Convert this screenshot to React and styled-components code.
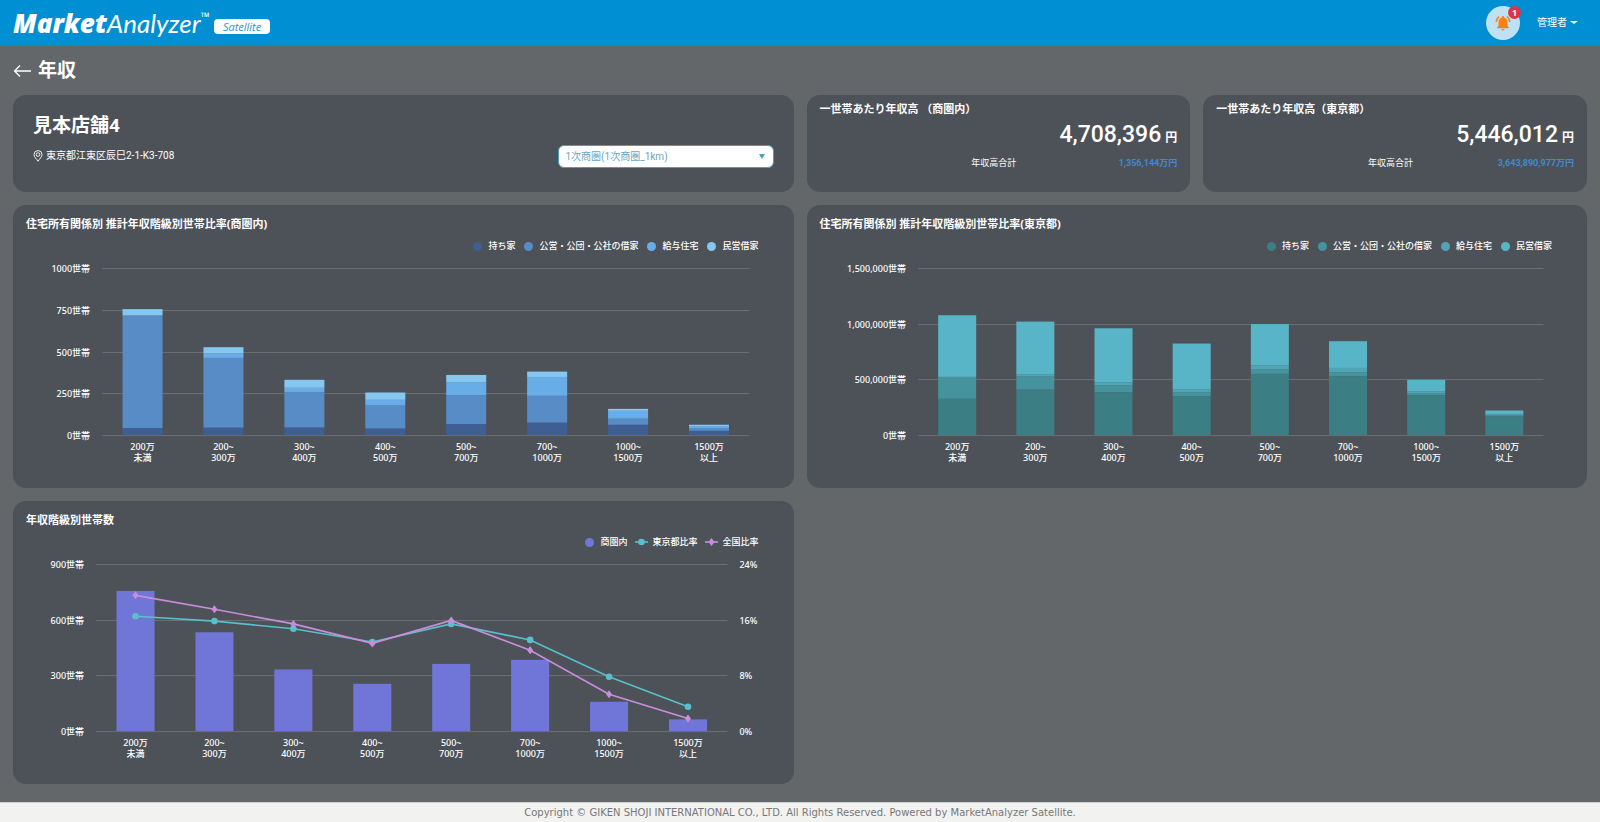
import React from "react";
import styled, { createGlobalStyle } from "styled-components";
import { MdNotificationsActive } from "react-icons/md";

const GlobalStyle = createGlobalStyle`
  *, *::before, *::after { box-sizing: border-box; }
  body {
    margin: 0;
    background: #636769;
    color: #fff;
    font-family: Roboto, "Noto Sans CJK JP", sans-serif;
  }
  h1, h2, p { margin: 0; }
`;

const chartFont = `"Noto Sans", "Noto Sans CJK JP", sans-serif`;

const Page = styled.div`
  min-height: 100vh;
  display: flex;
  flex-direction: column;
`;

const Header = styled.header`
  height: 46px;
  padding: 0 22px 0 13px;
  background: #008fd3;
  display: flex;
  align-items: center;
  justify-content: space-between;
`;

const Brand = styled.a`
  display: flex;
  align-items: center;
  gap: 4px;
  color: #fff;
  text-decoration: none;
`;

const Wordmark = styled.span`
  display: flex;
  align-items: baseline;
  font: italic 400 26px/32px Lato, sans-serif;

  b { font-family: "Open Sans", sans-serif; font-weight: 800; }
  sup {
    align-self: flex-start;
    padding-top: 4px;
    font: italic 600 12px/12px "Open Sans", sans-serif;
  }
`;

const Product = styled.span`
  height: 15px;
  padding: 0 9px;
  margin-top: 7px;
  border-radius: 4px;
  background: #fff;
  color: #2a95d0;
  font: italic 400 11px/15px "Open Sans", sans-serif;
`;

const HeaderTools = styled.div`
  display: flex;
  align-items: center;
  gap: 17px;
`;

const BellButton = styled.button`
  position: relative;
  width: 34px;
  height: 34px;
  padding: 0;
  border: 0;
  border-radius: 50%;
  background: #bfe1f4;
  color: #ff7f11;
  display: grid;
  place-items: center;
`;

const Badge = styled.span`
  position: absolute;
  top: 0;
  right: -1px;
  width: 13px;
  height: 13px;
  border-radius: 50%;
  background: #dc3545;
  color: #fff;
  font: 700 9px/13px "Noto Sans", sans-serif;
  text-align: center;
`;

const UserMenu = styled.button`
  padding: 0 0 2px;
  border: 0;
  background: none;
  color: #fff;
  font: 400 10px/16px "Noto Sans CJK JP", sans-serif;
  display: flex;
  align-items: center;
  gap: 3px;

  &::after {
    content: "";
    border: 4px solid transparent;
    border-top: 3px solid #fff;
    border-bottom: 0;
  }
`;

const Main = styled.main`
  flex: 1;
  padding: 0 13px 18px;
`;

const TitleBar = styled.div`
  height: 49px;
  display: flex;
  align-items: center;
  gap: 7px;
`;

const BackLink = styled.a`
  display: flex;
  color: #fff;
`;

const PageTitle = styled.h1`
  font-size: 19px;
  line-height: 28px;
  font-weight: 700;
`;

const Grid = styled.div`
  display: grid;
  grid-template-columns: repeat(4, 1fr);
  gap: 13px;
`;

const Card = styled.section`
  grid-column: span ${(p) => p.$span || 1};
  min-width: 0;
  border-radius: 13px;
  background: #4d5258;
`;

const StoreCard = styled(Card)`
  padding: 15px 20px 24px;
  display: flex;
  justify-content: space-between;
  align-items: flex-end;
`;

const StoreName = styled.h2`
  font-size: 19px;
  line-height: 30px;
  font-weight: 700;
`;

const Address = styled.p`
  display: flex;
  align-items: center;
  gap: 3px;
  padding: 7px 0 4px;
  font-size: 10px;
  line-height: 16px;
`;

const SelectBox = styled.label`
  position: relative;
  width: 216px;

  &::after {
    content: "";
    position: absolute;
    top: 9px;
    right: 9px;
    border: 3px solid transparent;
    border-top: 5px solid #45a3b5;
    border-bottom: 0;
    pointer-events: none;
  }
`;

const Select = styled.select`
  display: block;
  width: 100%;
  height: 23px;
  padding: 0 7px;
  border: 1px solid #45a3b5;
  border-radius: 6px;
  appearance: none;
  background: #fff;
  color: #6aa5c0;
  font: 400 10px/20px Roboto, "Noto Sans CJK JP", sans-serif;
`;

const StatCard = styled(Card)`
  padding: 6px 13px 21px;
`;

const CardTitle = styled.h2`
  font: 700 11px/16px "Noto Sans", "Noto Sans CJK JP", sans-serif;
`;

const StatValue = styled.p`
  margin-top: 4px;
  text-align: right;
  font-size: 23px;
  line-height: 28px;
  font-weight: 500;

  small { font-size: 12px; line-height: 1; font-weight: 700; margin-left: 4px; }
`;

const StatTotal = styled.p`
  display: grid;
  grid-template-columns: 55% 45%;
  margin-top: 6px;
  text-align: right;
  font-size: 9px;
  line-height: 16px;

  b { color: #4389cf; font-weight: 700; }
`;

const ChartCard = styled(Card)`
  padding-top: 11px;
  overflow: hidden;

  ${CardTitle} { padding: 0 13px; }
`;

const Legend = styled.ul`
  margin: 8px 35px 0;
  padding: 0;
  list-style: none;
  display: flex;
  justify-content: flex-end;
  gap: ${(p) => p.$gap}px;
  font: 500 9px/12px ${chartFont};
`;

const LegendItem = styled.li`
  display: flex;
  align-items: center;
  gap: ${(p) => (p.$line ? 4 : 6)}px;
`;

const Dot = styled.span`
  width: 9px;
  height: 9px;
  border-radius: 50%;
  background: ${(p) => p.$color};
`;

const ChartSvg = styled.svg`
  display: block;
  width: 100%;
  height: auto;
  fill: #fff;
  font: 500 9px ${chartFont};
`;

const Footer = styled.footer`
  height: 20px;
  border-top: 1px solid #d0d0d0;
  background: #f2f2f1;
  color: #777;
  text-align: center;
  font: 400 10px/19px "DejaVu Sans", sans-serif;
`;

const CATEGORIES = [
  ["200万", "未満"],
  ["200~", "300万"],
  ["300~", "400万"],
  ["400~", "500万"],
  ["500~", "700万"],
  ["700~", "1000万"],
  ["1000~", "1500万"],
  ["1500万", "以上"],
];

const HOUSING = ["持ち家", "公営・公団・公社の借家", "給与住宅", "民営借家"];

/* Running totals per income class, in the order of HOUSING. */
const AREA = {
  left: 89,
  right: 736,
  max: 1000,
  barWidth: 40,
  ticks: [[0, "0世帯"], [250, "250世帯"], [500, "500世帯"], [750, "750世帯"], [1000, "1000世帯"]],
  colors: ["#3e5e94", "#578cc6", "#69ade8", "#85c7f0"],
  stacks: [
    [42, 714, 717, 754],
    [45, 462, 490, 526],
    [46, 255, 283, 331],
    [40, 177, 211, 255],
    [66, 239, 317, 360],
    [75, 235, 348, 380],
    [62, 98, 145, 157],
    [26, 42, 54, 62],
  ],
};

const TOKYO = {
  left: 111,
  right: 736,
  max: 1500,
  barWidth: 38,
  ticks: [[0, "0世帯"], [500, "500,000世帯"], [1000, "1,000,000世帯"], [1500, "1,500,000世帯"]],
  colors: ["#3b7e83", "#45939c", "#4fa5b3", "#58b5c7"],
  stacks: [
    [326, 515, 523, 1076],
    [409, 526, 547, 1019],
    [385, 448, 475, 959],
    [350, 385, 412, 822],
    [550, 592, 627, 997],
    [529, 562, 603, 843],
    [358, 373, 394, 496],
    [170, 176, 187, 221],
  ],
};

const HOUSEHOLDS = {
  left: 83,
  right: 714,
  max: 900,
  barWidth: 38,
  ticks: [[0, "0世帯", "0%"], [300, "300世帯", "8%"], [600, "600世帯", "16%"], [900, "900世帯", "24%"]],
  colors: ["#7076d8"],
  stacks: [[755], [532], [332], [255], [362], [384], [158], [63]],
  lines: [
    { name: "東京都比率", color: "#58bfcc", values: [16.5, 15.8, 14.7, 12.8, 15.4, 13.1, 7.8, 3.5] },
    { name: "全国比率", color: "#cb8ddb", diamond: true, values: [19.5, 17.5, 15.4, 12.6, 15.9, 11.6, 5.3, 1.8] },
  ],
};

const TOP = 16;
const BASE = 183;

function Marker({ x, y, color, diamond }) {
  return diamond ? (
    <path d={`M${x} ${y - 4}L${x + 3} ${y}L${x} ${y + 4}L${x - 3} ${y}Z`} fill={color} />
  ) : (
    <circle cx={x} cy={y} r="3.3" fill={color} />
  );
}

function Chart({ data, label }) {
  const { left, right, max, barWidth, ticks, colors, stacks, lines = [] } = data;
  const step = (right - left) / CATEGORIES.length;
  const center = (i) => left + step * (i + 0.5);
  const y = (v, top = max) => BASE - (v / top) * (BASE - TOP);
  return (
    <ChartSvg viewBox="0 0 780 236" role="img" aria-label={label}>
      {ticks.map(([v, text, percent]) => (
        <g key={text}>
          <rect x={left} y={Math.round(y(v))} width={right - left} height="1" fill="#6e6f71" />
          <text x={left - 12} y={y(v) + 4} textAnchor="end">{text}</text>
          {percent && <text x={right + 12} y={y(v) + 4}>{percent}</text>}
        </g>
      ))}
      {stacks.map((stack, i) =>
        stack.map((v, k) => {
          const from = k ? stack[k - 1] : 0;
          return (
            <rect
              key={`${i}-${k}`}
              x={center(i) - barWidth / 2}
              y={y(v)}
              width={barWidth}
              height={y(from) - y(v)}
              fill={colors[k]}
            />
          );
        })
      )}
      {lines.map((line) => (
        <g key={line.name}>
          <polyline
            points={line.values.map((v, i) => `${center(i)},${y(v, 24)}`).join(" ")}
            fill="none"
            stroke={line.color}
            strokeWidth="1.6"
          />
          {line.values.map((v, i) => (
            <Marker key={i} x={center(i)} y={y(v, 24)} color={line.color} diamond={line.diamond} />
          ))}
        </g>
      ))}
      {CATEGORIES.map(([first, second], i) => (
        <g key={first} textAnchor="middle">
          <text x={center(i)} y={BASE + 15}>{first}</text>
          <text x={center(i)} y={BASE + 26}>{second}</text>
        </g>
      ))}
    </ChartSvg>
  );
}

function HousingCard({ title, data }) {
  return (
    <ChartCard $span={2}>
      <CardTitle>{title}</CardTitle>
      <Legend $gap={9}>
        {HOUSING.map((name, i) => (
          <LegendItem key={name}>
            <Dot $color={data.colors[i]} />
            {name}
          </LegendItem>
        ))}
      </Legend>
      <Chart data={data} label={title} />
    </ChartCard>
  );
}

function Stat({ title, value, total }) {
  return (
    <StatCard>
      <CardTitle>{title}</CardTitle>
      <StatValue>{value}<small>円</small></StatValue>
      <StatTotal><span>年収高合計</span><b>{total}</b></StatTotal>
    </StatCard>
  );
}

export default function App() {
  return (
    <Page>
      <GlobalStyle />
      <Header>
        <Brand href="#">
          <Wordmark><b>Market</b>Analyzer<sup>™</sup></Wordmark>
          <Product>Satellite</Product>
        </Brand>
        <HeaderTools>
          <BellButton type="button" aria-label="通知">
            <MdNotificationsActive size={18} />
            <Badge>1</Badge>
          </BellButton>
          <UserMenu type="button">管理者</UserMenu>
        </HeaderTools>
      </Header>
      <Main>
        <TitleBar>
          <BackLink href="#" aria-label="戻る">
            <svg width="18" height="14" viewBox="0 0 18 14" fill="none" stroke="currentColor" strokeWidth="1.3">
              <path d="M18 7H1.500M7 1.500L1.500 7L7 12.500" />
            </svg>
          </BackLink>
          <PageTitle>年収</PageTitle>
        </TitleBar>
        <Grid>
          <StoreCard $span={2}>
            <div>
              <StoreName>見本店舗4</StoreName>
              <Address>
                <svg width="10" height="12" viewBox="0 0 10 12" fill="none" stroke="currentColor" strokeWidth="0.9">
                  <path d="M5 11.300C3.800 9.200 1 7 1 4.600A4 4 0 0 1 9 4.600C9 7 6.200 9.200 5 11.300Z" />
                  <circle cx="5" cy="4.600" r="1.800" />
                </svg>
                東京都江東区辰巳2-1-K3-708
              </Address>
            </div>
            <SelectBox>
              <Select aria-label="商圏" defaultValue="1">
                <option value="1">1次商圏(1次商圏_1km)</option>
              </Select>
            </SelectBox>
          </StoreCard>
          <Stat title="一世帯あたり年収高 （商圏内）" value="4,708,396" total="1,356,144万円" />
          <Stat title="一世帯あたり年収高（東京都）" value="5,446,012" total="3,643,890,977万円" />
          <HousingCard title="住宅所有関係別 推計年収階級別世帯比率(商圏内)" data={AREA} />
          <HousingCard title="住宅所有関係別 推計年収階級別世帯比率(東京都)" data={TOKYO} />
          <ChartCard $span={2}>
            <CardTitle>年収階級別世帯数</CardTitle>
            <Legend $gap={8}>
              <LegendItem><Dot $color={HOUSEHOLDS.colors[0]} />商圏内</LegendItem>
              {HOUSEHOLDS.lines.map((line) => (
                <LegendItem key={line.name} $line>
                  <svg width="13" height="10" viewBox="0 0 13 10">
                    <path d="M0 5H13" stroke={line.color} strokeWidth="1.6" />
                    <Marker x={6.5} y={5} color={line.color} diamond={line.diamond} />
                  </svg>
                  {line.name}
                </LegendItem>
              ))}
            </Legend>
            <Chart data={HOUSEHOLDS} label="年収階級別世帯数" />
          </ChartCard>
        </Grid>
      </Main>
      <Footer>
        Copyright © GIKEN SHOJI INTERNATIONAL CO., LTD. All Rights Reserved. Powered by MarketAnalyzer Satellite.
      </Footer>
    </Page>
  );
}
